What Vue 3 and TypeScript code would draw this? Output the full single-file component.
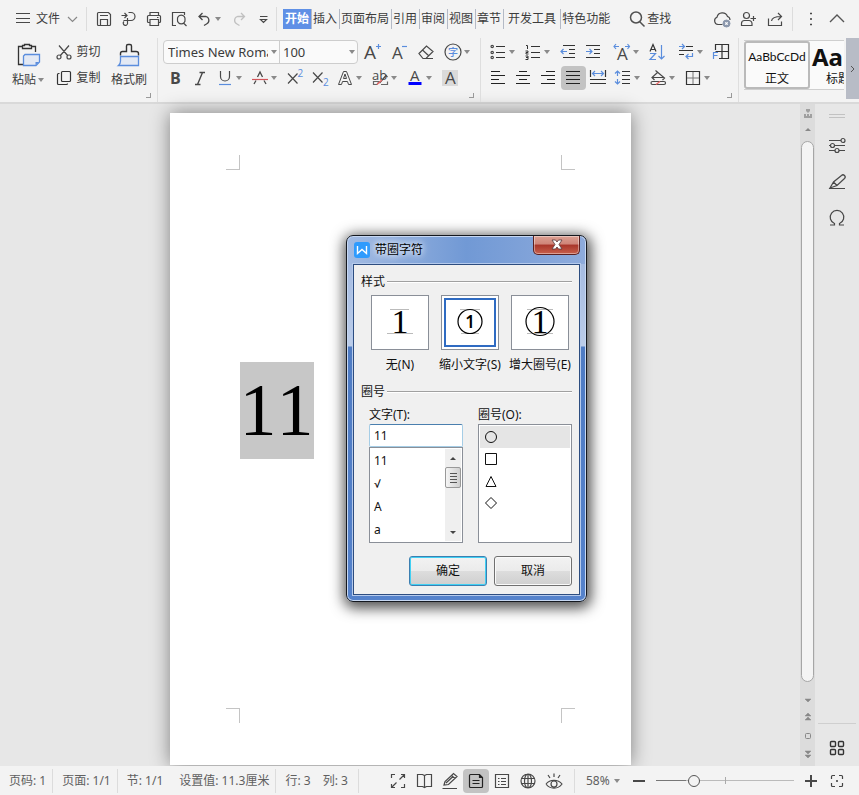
<script setup lang="ts">
import { h, ref } from 'vue'

interface Part {
  d?: string
  t?: string
  x?: number
  y?: number
  s?: number
  c?: string
  f?: string
  w?: number
  b?: number
}

const INK = '#484848'
const BLUE = '#5a8ddd'
const SANS = '"Open Sans", "Noto Sans CJK SC", sans-serif'

const p = (d: string, c = INK, f = 'none', w = 1.2): Part => ({ d, c, f, w })
const t = (text: string, x: number, y: number, s: number, c = INK, b = 400): Part => ({ t: text, x, y, s, c, b })

const icons: Record<string, Part[]> = {
  menu: [p('M3 4.500H17M3 9.500H17M3 13.500H17')],
  down: [p('M5 8L9.500 12.500L14 8', '#888')],
  up: [p('M3 13L10 6L17 13', '#555', 'none', 1.4)],
  save: [p('M4.500 3.500H14.500L16.500 5.500V15.500A1 1 0 0 1 15.500 16.500H4.500A1 1 0 0 1 3.500 15.500V4.500A1 1 0 0 1 4.500 3.500ZM6.500 16V10.500H13.500V16M6 6.500H14')],
  exportDoc: [p('M2.500 6.500H8M5.500 4L8 6.500L5.500 9M9.500 3.500H12A4 4 0 0 1 12 11.500H4.500M8.500 9V13.500A2.200 2.200 0 1 1 5 12.500')],
  print: [p('M6 6V3.500H14.500V6M6 13.500H4.500A1 1 0 0 1 3.500 12.500V7.500A1 1 0 0 1 4.500 6.500H15.500A1 1 0 0 1 16.500 7.500V12.500A1 1 0 0 1 15.500 13.500H14.500M6 10.500H14.500V16.500H6ZM13 8.500H14.500')],
  preview: [p('M7 16.500H3.500V3.500H15.500V6M14.500 14L17.500 17M8.500 10.500A3.800 3.800 0 1 0 16 10.500A3.800 3.800 0 1 0 8.500 10.500')],
  undo: [p('M8.500 4L5 7.500L8.500 11M5.500 7.500H12A4 4 0 0 1 12.500 15L10 16.500', INK, 'none', 1.3)],
  redo: [p('M12 4L15.500 7.500L12 11M15 7.500H8.500A4 4 0 0 0 8 15L10.500 16.500', '#c0c0c0', 'none', 1.3)],
  more: [p('M6 7.500H13.500M6.500 10.500L9.500 13.500L12.500 10.500Z')],
  search: [p('M3.500 8.500A5.500 5.500 0 1 0 14.500 8.500A5.500 5.500 0 1 0 3.500 8.500M13 13L17.500 17.500', '#505050', 'none', 1.5)],
  cloud: [p('M10.500 15.500H6A3.800 3.800 0 0 1 5 8.200A5.500 5.500 0 0 1 15.500 7.500A3.600 3.600 0 0 1 18 11'), p('M11 14.500A3.500 3.500 0 1 0 18 14.500A3.500 3.500 0 1 0 11 14.500', '#8b97ac', '#8b97ac', 1), p('M13.300 13.300L15.700 15.700M15.700 13.300L13.300 15.700', '#fff')],
  person: [p('M5.500 6.500A3 3 0 1 0 11.500 6.500A3 3 0 1 0 5.500 6.500M3.500 16.500V14.500A3 3 0 0 1 6.500 11.500H11A3 3 0 0 1 14 14.500V16.500ZM12.500 9.500H18M15.500 7V12')],
  share: [p('M4.500 9.500V16.500H17.500V12.500M7.500 12C8 8.500 11 7.500 17 7.500M14 4L17.500 7.500L14 11')],
  dots: [p('M9.500 4H10.500V5H9.500ZM9.500 9.500H10.500V10.500H9.500ZM9.500 15H10.500V16H9.500Z', INK, INK, 1)],
  cut: [p('M5 3.500L14 14M15 3.500L6 14M3 15A2 2 0 1 0 7 15A2 2 0 1 0 3 15M13 15A2 2 0 1 0 17 15A2 2 0 1 0 13 15')],
  copy: [p('M8.500 3.500H15.500A1 1 0 0 1 16.500 4.500V12.500A1 1 0 0 1 15.500 13.500H8.500A1 1 0 0 1 7.500 12.500V4.500A1 1 0 0 1 8.500 3.500ZM5.500 5.500H4.500A1 1 0 0 0 3.500 6.500V15.500A1 1 0 0 0 4.500 16.500H12.500A1 1 0 0 0 13.500 15.500', '#333')],
  fontUp: [t('A', 2, 17, 19), p('M14 4.500H19M16.500 2V7', BLUE)],
  fontDown: [t('A', 3, 17, 17), p('M13 4.500H18', BLUE)],
  eraser: [p('M3 11.500L10.500 4L17 9.500L10 16.500H7ZM6.500 8L13 14M9 16.500H17')],
  phonetic: [p('M2 10A8 8 0 1 0 18 10A8 8 0 1 0 2 10'), t('字', 5, 14, 10, BLUE, 500)],
  bold: [t('B', 5, 15.5, 16, INK, 700)],
  italic: [p('M9.500 4.500H15M5 16.500H10.500M12.500 4.500L7.500 16.500', INK, 'none', 1.4)],
  underline: [p('M5.500 3V8.500A4.500 4.500 0 0 0 14.500 8.500V3'), p('M4 16.500H16', BLUE)],
  strike: [p('M4 16L6 12.500M7.500 9L10 4L12.500 9M14 12.500L16 16', INK, 'none', 1.3), p('M2 11.500H18', '#d2555a')],
  sup: [p('M3 5.500L12.500 15.500M12.500 5.500L3 15.500'), t('2', 12.5, 9, 10, BLUE)],
  sub: [p('M3 4.500L12.500 14.500M12.500 4.500L3 14.500'), t('2', 13, 18, 10, BLUE)],
  outline: [p('M3.500 16.500L8.500 3.500H11.500L16.500 16.500H13.500L12.500 13.500H7.500L6.500 16.500ZM8.500 10.500H11.500L10 6Z', INK, 'none', 1)],
  highlight: [t('ab', 2, 12, 13), p('M3.500 13.500H9L7 16.500H3.500ZM11 16.500H17.500V13.500', '#666'), p('M9.500 15L16 7.500L17.500 9'), p('M7 16.500L12 12', '#e66')],
  fontColor: [t('A', 5, 13, 15), p('M3.500 15.500H16.500', '#0000ff', 'none', 3)],
  shade: [p('M2 2H18V18H2Z', '#dadada', '#dadada', 0), t('A', 5, 16, 17)],
  bullets: [p('M8 4.500H17M8 10.500H17M8 15.500H17', '#333'), p('M3 4.500A1.200 1.200 0 1 0 5.400 4.500A1.200 1.200 0 1 0 3 4.500M3 10.500A1.200 1.200 0 1 0 5.400 10.500A1.200 1.200 0 1 0 3 10.500M3 15.500A1.200 1.200 0 1 0 5.400 15.500A1.200 1.200 0 1 0 3 15.500')],
  numbers: [p('M8 4.500H17M8 10.500H17M8 15.500H17', '#333'), p('M3 3.500H4.500V7M2.500 9H5V10.500H3V12H5.500M2.500 14H5V17.500H2.500M3 15.500H5', '#333', 'none', 1)],
  outdent: [p('M5 3.500H17M11 7.500H17M11 11.500H17M5 15.500H17', '#333'), p('M3 9.500H9M5.500 7L3 9.500L5.500 12', BLUE)],
  indent: [p('M3 3.500H17M11 7.500H17M11 11.500H17M3 15.500H17', '#333'), p('M3 9.500H9M6.500 7L9 9.500L6.500 12', BLUE)],
  textScale: [t('A', 5, 18, 17), p('M2 4.500H7M4 2L2 4.500L4 7M13 4.500H17.500M15.500 2L17.500 4.500L15.500 7', BLUE)],
  sort: [p('M3 9.500L6 2.500L9 9.500M4 7.500H8', '#333'), p('M3 11.500H8.500L3 17.500H9M14.500 3V17M11.500 14L14.500 17L17.500 14', BLUE)],
  tabs: [p('M10 4.500H17M3 8.500H17M3 12.500H8', '#333'), p('M3 4.500H8M6 2L8.500 4.500L6 7M16.500 11V14.500H10M12.500 12L10 14.500L12.500 17', BLUE)],
  layout: [p('M8 16.500H17.500V2.500H4.500V8M11 3V16M4.500 9.500H17', '#333'), p('M2.500 17V10.500H7M2.500 13.500H6.500', BLUE)],
  left: [p('M3 3.500H12M3 7.500H17M3 11.500H11M3 15.500H17', '#222')],
  center: [p('M6 3.500H14M3 7.500H17M6 11.500H14M3 15.500H17', '#222')],
  right: [p('M8 3.500H17M3 7.500H17M9 11.500H17M3 15.500H17', '#222')],
  justify: [p('M3 3.500H17M3 7.500H17M3 11.500H17M3 15.500H17', '#222')],
  distribute: [p('M2.500 2V9M17.500 2V9M2 11.500H18M2 15.500H18', '#333'), p('M4.500 5.500H15.500M7 3L4.500 5.500L7 8M13 3L15.500 5.500L13 8', BLUE)],
  lineGap: [p('M9 3.500H17M9 7.500H17M9 11.500H17M9 15.500H17', '#333'), p('M4.500 3V8M2 5.500L4.500 3L7 5.500M4.500 11V16M2 13.500L4.500 16L7 13.500', BLUE)],
  bucket: [p('M7.500 2.500L16.500 10L14.500 12M9.500 4.500L4 9.500L6.500 12M4.500 9.500H16M4.500 13.500H16A1.500 1.500 0 0 1 16 16.500H4.500A1.500 1.500 0 0 1 4.500 13.500Z'), p('M8 16.500L12 13.500', '#e66')],
  border: [p('M3.500 3.500H16.500V16.500H3.500Z', '#333'), p('M10 4V16M4 10H16', '#777', 'none', 1)],
  full: [p('M3.500 7V3.500H7M13 3.500H16.500V7M3.500 13V16.500H7M13 16.500H16.500V13M11.500 8.500L16 4M8.500 11.500L4 16')],
  book: [p('M3.500 3.500H8.500L10.500 4.500L12.500 3.500H17.500V15.500H12.500L10.500 16.500L8.500 15.500H3.500ZM10.500 4.500V16')],
  pen: [p('M4 14L5 10.500L13.500 2.500L17 5.500L8.500 13.500ZM11.500 4.500L15 7.500M6 12L13 5.500M2.500 17.500H17')],
  page: [p('M4.500 3.500H13.500L16.500 6.500V15.500A1 1 0 0 1 15.500 16.500H4.500A1 1 0 0 1 3.500 15.500V4.500A1 1 0 0 1 4.500 3.500ZM6.500 9.500H13.500M6.500 12.500H13.500M13.500 4V6.500H16', '#222')],
  outlineView: [p('M3.500 3.500H16.500V16.500H3.500ZM6 7.500H7.500M9 7.500H14M6 10.500H7.500M9 10.500H14M6 13.500H7.500M9 13.500H14')],
  web: [p('M3 10A7 7 0 1 0 17 10A7 7 0 1 0 3 10M6.500 10A3.500 7 0 1 0 13.500 10A3.500 7 0 1 0 6.500 10M10 3V17M3.500 7.500H16.500M3.500 12.500H16.500')],
  eye: [p('M2 13C6 8 14 8 18 13C14 18.500 6 18.500 2 13M7 13A3 3 0 1 0 13 13A3 3 0 1 0 7 13M10 2.500V6M4 4L6 7M16 4L14 7')],
  minus: [p('M4 10H16', INK, 'none', 2)],
  plus: [p('M4 10H16M10 4V16', INK, 'none', 2)],
  focus: [p('M4.500 8V5.500A1 1 0 0 1 5.500 4.500H8M12 4.500H14.500A1 1 0 0 1 15.500 5.500V8M15.500 12V14.500A1 1 0 0 1 14.500 15.500H12M8 15.500H5.500A1 1 0 0 1 4.500 14.500V12', '#444'), p('M9.500 9.500H10.500V10.500H9.500Z', INK, INK, 1)],
  settings: [p('M2 4.500H14M2 9.500H3.500M7.500 9.500H18M2 14.500H8M12 14.500H18M14 4.500A2 2 0 1 0 18 4.500A2 2 0 1 0 14 4.500M3.500 9.500A2 2 0 1 0 7.500 9.500A2 2 0 1 0 3.500 9.500M8 14.500A2 2 0 1 0 12 14.500A2 2 0 1 0 8 14.500')],
  edit: [p('M3 16L6.500 10L14.500 3.500A1.500 1.500 0 0 1 17.500 6.500L10 13.500ZM6.500 10L10 13.500M2 16.500H18')],
  omega: [p('M3 17H7.500V15.500A6.800 6.800 0 1 1 12.500 15.500V17H17')],
  apps: [p('M4.500 3.500H7.500A1 1 0 0 1 8.500 4.500V7.500A1 1 0 0 1 7.500 8.500H4.500A1 1 0 0 1 3.500 7.500V4.500A1 1 0 0 1 4.500 3.500ZM12.500 3.500H15.500A1 1 0 0 1 16.500 4.500V7.500A1 1 0 0 1 15.500 8.500H12.500A1 1 0 0 1 11.500 7.500V4.500A1 1 0 0 1 12.500 3.500ZM4.500 11.500H7.500A1 1 0 0 1 8.500 12.500V15.500A1 1 0 0 1 7.500 16.500H4.500A1 1 0 0 1 3.500 15.500V12.500A1 1 0 0 1 4.500 11.500ZM12.500 11.500H15.500A1 1 0 0 1 16.500 12.500V15.500A1 1 0 0 1 15.500 16.500H12.500A1 1 0 0 1 11.500 15.500V12.500A1 1 0 0 1 12.500 11.500Z', '#333', 'none', 1.4)],
}

const Icon = (props: { name: string }) =>
  h(
    'svg',
    { width: 20, height: 20, viewBox: '0 0 20 20', 'aria-hidden': 'true' },
    (icons[props.name] ?? []).map((q) =>
      q.t
        ? h('text', { x: q.x, y: q.y, 'font-size': q.s, fill: q.c, 'font-weight': q.b, 'font-family': SANS }, q.t)
        : h('path', { d: q.d, stroke: q.c, fill: q.f, 'stroke-width': q.w }),
    ),
  )
Icon.props = ['name']

interface Tool {
  icon: string
  label: string
  caret?: boolean
  active?: boolean
}
const tool = (icon: string, label: string, caret = false, active = false): Tool => ({ icon, label, caret, active })

const quickTools = [tool('save', '保存'), tool('exportDoc', '输出'), tool('print', '打印'), tool('preview', '打印预览'), tool('undo', '撤销', true), tool('redo', '恢复'), tool('more', '更多')]
const tabs = ['开始', '插入', '页面布局', '引用', '审阅', '视图', '章节', '开发工具', '特色功能']
const activeTab = ref('开始')
const accountTools = [tool('cloud', '云同步'), tool('person', '协作'), tool('share', '分享')]
const sizeTools = [tool('fontUp', '增大字号'), tool('fontDown', '减小字号'), tool('eraser', '清除格式'), tool('phonetic', '拼音指南', true)]
const fontTools = [tool('bold', '加粗'), tool('italic', '倾斜'), tool('underline', '下划线', true), tool('strike', '删除线', true), tool('sup', '上标'), tool('sub', '下标'), tool('outline', '文字效果', true), tool('highlight', '突出显示', true), tool('fontColor', '字体颜色', true), tool('shade', '字符底纹')]
const listTools = [
  [tool('bullets', '项目符号', true), tool('numbers', '编号', true), tool('outdent', '减少缩进'), tool('indent', '增加缩进')],
  [tool('textScale', '中文版式', true), tool('sort', '排序')],
  [tool('tabs', '制表位', true), tool('layout', '框架')],
]
const alignTools = [tool('left', '左对齐'), tool('center', '居中'), tool('right', '右对齐'), tool('justify', '两端对齐', false, true), tool('distribute', '分散对齐'), tool('lineGap', '行距', true), tool('bucket', '底纹', true), tool('border', '边框', true)]
const viewTools = [tool('full', '全屏'), tool('book', '阅读版式'), tool('pen', '写作模式'), tool('page', '页面视图', false, true), tool('outlineView', '大纲'), tool('web', 'Web 版式'), tool('eye', '护眼模式')]
const sideTools = [tool('settings', '设置'), tool('edit', '样式'), tool('omega', '符号')]

const fontName = ref('Times New Roman')
const fontSize = ref('100')
const zoom = ref(25)
const dialogOpen = ref(true)
const styleOptions = ['无(N)', '缩小文字(S)', '增大圈号(E)']
const style = ref('缩小文字(S)')
const circledText = ref('11')
const characters = ['11', '√', 'A', 'a']
const shapes = [
  { name: '圆形', d: 'M1.500 7a5.500 5.500 0 1 0 11 0a5.500 5.500 0 1 0 -11 0' },
  { name: '方形', d: 'M1.500 1.500H12.500V12.500H1.500Z' },
  { name: '三角形', d: 'M7 2.500L12 12.500H2Z' },
  { name: '菱形', d: 'M7 1.500L12.500 7L7 12.500L1.500 7Z' },
]
const shape = ref('圆形')
</script>

<template>
  <div class="app">
    <header class="ribbon">
      <div class="topbar">
        <button class="file"><Icon name="menu" /><span>文件</span><Icon name="down" /></button>
        <i class="rule"></i>
        <div class="quick">
          <button v-for="q in quickTools" :key="q.icon" class="tool" :class="{ wide: q.caret }" :aria-label="q.label">
            <Icon :name="q.icon" /><i v-if="q.caret" class="caret"></i>
          </button>
        </div>
        <i class="rule"></i>
        <nav class="tabs">
          <button v-for="name in tabs" :key="name" class="tab" :class="{ on: name === activeTab, roomy: name === '开发工具' }" @click="activeTab = name">{{ name }}</button>
        </nav>
        <button class="search"><Icon name="search" /><span>查找</span></button>
        <div class="account">
          <button v-for="q in accountTools" :key="q.icon" class="cell" :aria-label="q.label"><Icon :name="q.icon" /></button>
          <i class="rule"></i>
          <button class="cell" aria-label="更多选项"><Icon name="dots" /></button>
          <button class="cell" aria-label="收起功能区"><Icon name="up" /></button>
        </div>
      </div>

      <div class="groups">
        <section class="group clipboard">
          <button class="big">
            <svg width="26" height="26" viewBox="0 0 26 26">
              <path d="M7 4.500H3.500V22.500H8M17 4.500H20.500V10M7.500 6.500V3.500H9.500V2.500H14.500V3.500H16.500V6.500Z" fill="none" stroke="#333" stroke-width="1.300" />
              <path d="M10 12.500H24.500V20L21 23.500H8.500V14Z" fill="#e3e9f4" stroke="#5a8ddd" stroke-width="1.300" />
              <path d="M20.500 23V20H24Z" fill="#5a8ddd" />
            </svg>
            <span>粘贴<i class="caret"></i></span>
          </button>
          <div class="stack">
            <button class="line"><Icon name="cut" />剪切</button>
            <button class="line"><Icon name="copy" />复制</button>
          </div>
          <button class="big">
            <svg width="26" height="26" viewBox="0 0 26 26">
              <path d="M4.500 13.500V11.500Q4.500 9.500 6.500 9.500H10.500V4Q10.500 2.500 12 2.500H14Q15.500 2.500 15.500 4V9.500H20Q22.500 9.500 22.500 11.500V13.500" fill="none" stroke="#333" stroke-width="1.400" />
              <path d="M4.500 14.500H22.500V23.500H2.500Q4.500 22 4.500 19Z" fill="#e3e9f4" stroke="#5a8ddd" stroke-width="1.300" />
            </svg>
            <span>格式刷</span>
          </button>
          <i class="launcher"></i>
        </section>

        <section class="group font">
          <div class="toolrow spaced">
            <div class="combo">
              <input v-model="fontName" class="name" aria-label="字体" />
              <button aria-label="选择字体"><i class="caret"></i></button>
              <input v-model="fontSize" class="size" aria-label="字号" />
              <button aria-label="选择字号"><i class="caret"></i></button>
            </div>
            <button v-for="q in sizeTools" :key="q.icon" class="tool" :class="{ wide: q.caret }" :aria-label="q.label">
              <Icon :name="q.icon" /><i v-if="q.caret" class="caret"></i>
            </button>
          </div>
          <div class="toolrow">
            <button v-for="q in fontTools" :key="q.icon" class="tool" :class="{ wide: q.caret }" :aria-label="q.label">
              <Icon :name="q.icon" /><i v-if="q.caret" class="caret"></i>
            </button>
          </div>
          <i class="launcher"></i>
        </section>

        <section class="group para">
          <div class="toolrow sets">
            <div v-for="(set, n) in listTools" :key="n" class="toolrow">
              <button v-for="q in set" :key="q.icon" class="tool" :class="{ wide: q.caret }" :aria-label="q.label">
                <Icon :name="q.icon" /><i v-if="q.caret" class="caret"></i>
              </button>
            </div>
          </div>
          <div class="toolrow">
            <button v-for="q in alignTools" :key="q.icon" class="tool" :class="{ wide: q.caret, active: q.active }" :aria-label="q.label">
              <Icon :name="q.icon" /><i v-if="q.caret" class="caret"></i>
            </button>
          </div>
          <i class="launcher"></i>
        </section>

        <section class="gallery">
          <button class="sample chosen"><b class="body-face">AaBbCcDd</b><span>正文</span></button>
          <button class="sample"><b class="head-face">AaBb</b><span>标题 1</span></button>
        </section>
        <button class="scroll-groups" aria-label="更多样式">
          <svg width="6" height="8" viewBox="0 0 6 8"><path d="M1 1L4 4L1 7" fill="none" stroke="#555" /></svg>
        </button>
      </div>
    </header>

    <main class="work">
      <div class="canvas">
        <article class="paper">
          <div class="marks"><i class="mark tl"></i><i class="mark tr"></i></div>
          <p class="text"><span>11</span></p>
          <div class="marks"><i class="mark bl"></i><i class="mark br"></i></div>
        </article>
      </div>

      <div class="vscroll">
        <svg width="12" height="10" viewBox="0 0 12 10"><path d="M4 0H8V2L6 4L4 2ZM2 5H4V7H5V5H7V7H8V5H10V9H2Z" fill="#a0a0a0" /></svg>
        <svg width="12" height="18" viewBox="0 0 12 18"><path d="M3 12L6 9L9 12Z" fill="#888" /></svg>
        <div class="thumb"></div>
        <svg width="12" height="84" viewBox="0 0 12 84">
          <path d="M3 17H9L6 20ZM3 34L6 31L9 34ZM3 38L6 35L9 38ZM3 69H9L6 72ZM3 73H9L6 76Z" fill="#888" stroke="#888" stroke-width=".5" />
          <rect x="3.500" y="51.500" width="5" height="5" rx="1" fill="none" stroke="#888" />
        </svg>
      </div>

      <aside class="side">
        <i class="grip"></i>
        <button v-for="q in sideTools" :key="q.icon" :aria-label="q.label"><Icon :name="q.icon" /></button>
        <button class="apps" aria-label="应用"><Icon name="apps" /></button>
      </aside>
    </main>

    <footer class="status">
      <span class="stat">页码: 1</span><i class="rule"></i>
      <span class="stat">页面: 1/1</span><i class="rule"></i>
      <span class="stat">节: 1/1</span>
      <span class="stat">设置值: 11.3厘米</span><i class="rule"></i>
      <span class="stat">行: 3</span>
      <span class="stat last">列: 3</span><i class="rule"></i>
      <div class="views">
        <button v-for="q in viewTools" :key="q.icon" class="cell" :class="{ active: q.active }" :aria-label="q.label"><Icon :name="q.icon" /></button>
      </div>
      <i class="rule"></i>
      <button class="percent">58%<i class="caret"></i></button>
      <button class="cell" aria-label="缩小"><Icon name="minus" /></button>
      <input v-model="zoom" class="zoom" type="range" min="0" max="100" aria-label="显示比例" />
      <button class="cell" aria-label="放大"><Icon name="plus" /></button>
      <button class="cell" aria-label="适合窗口"><Icon name="focus" /></button>
    </footer>

    <form v-if="dialogOpen" class="dialog" role="dialog" aria-labelledby="dialog-title" @submit.prevent="dialogOpen = false">
      <div class="titlebar">
        <svg width="16" height="16" viewBox="0 0 16 16">
          <rect width="16" height="16" rx="3" fill="#2f9bfd" />
          <path d="M3.500 4V11.500L8 7.500L12.500 11.500V4" fill="none" stroke="#fff" stroke-width="1.400" />
        </svg>
        <h1 id="dialog-title">带圈字符</h1>
        <button type="button" class="close" aria-label="关闭" @click="dialogOpen = false">
          <svg width="14" height="12" viewBox="0 0 14 12">
            <path d="M2 1H5.500L7 3L8.500 1H12L9 5.500L12 10H8.500L7 8L5.500 10H2L5 5.500Z" fill="#fff" stroke="#55383c" stroke-width=".8" />
          </svg>
        </button>
      </div>
      <div class="panel">
        <h2><span>样式</span></h2>
        <div class="options">
          <label v-for="(name, n) in styleOptions" :key="name" class="option" :class="{ picked: name === style }">
            <input v-model="style" type="radio" name="style" :value="name" />
            <span class="tile">
              <svg width="52" height="49" viewBox="0 0 52 49">
                <path :d="n === 0 ? 'M16 11.500H35M13 35.500H39' : n === 1 ? 'M16 11.500H36M17 35.500H35' : 'M13 11.500H39M13 35.500H39'" stroke="#bbb" />
                <circle v-if="n > 0" cx="26" cy="23.500" :r="n === 1 ? 12 : 14" fill="none" stroke="#000" stroke-width="1.200" />
                <text x="26" :y="n === 1 ? 30 : 35" text-anchor="middle" :class="n === 1 ? 'digit-small' : 'digit-large'">1</text>
              </svg>
            </span>
            <span>{{ name }}</span>
          </label>
        </div>
        <h2><span>圈号</span></h2>
        <div class="pickers">
          <div class="picker">
            <label for="circled">文字(T):</label>
            <input id="circled" v-model="circledText" class="entry" />
            <div class="list split">
              <ul role="listbox" aria-label="文字">
                <li v-for="c in characters" :key="c" role="option" @click="circledText = c">{{ c }}</li>
              </ul>
              <div class="bar">
                <svg width="16" height="18" viewBox="0 0 16 18"><path d="M5 11L8 8L11 11Z" fill="#444" /></svg>
                <i class="knob"></i>
                <svg width="16" height="18" viewBox="0 0 16 18"><path d="M5 8L8 11L11 8Z" fill="#444" /></svg>
              </div>
            </div>
          </div>
          <div class="picker">
            <label id="shape-label">圈号(O):</label>
            <ul class="list shapes" role="listbox" aria-labelledby="shape-label">
              <li v-for="s in shapes" :key="s.name" role="option" :aria-label="s.name" :class="{ sel: s.name === shape }" @click="shape = s.name">
                <svg width="14" height="14" viewBox="0 0 14 14"><path :d="s.d" fill="none" stroke="#111" /></svg>
              </li>
            </ul>
          </div>
        </div>
        <div class="actions">
          <button type="submit" class="push primary">确定</button>
          <button type="button" class="push" @click="dialogOpen = false">取消</button>
        </div>
      </div>
    </form>
  </div>
</template>

<style>
body {
  margin: 0;
}
</style>

<style scoped>
.app {
  position: relative;
  display: flex;
  flex-direction: column;
  height: 100vh;
  overflow: hidden;
  background: #e7e7e7;
  color: #3c3c3c;
  font: 12px/16px "Noto Sans", Roboto, "Noto Sans CJK SC", sans-serif;
}
*,
*::before,
*::after {
  box-sizing: border-box;
}
button,
input {
  margin: 0;
  padding: 0;
  border: 0;
  background: none;
  color: inherit;
  font: inherit;
}
svg {
  display: block;
  flex: none;
  overflow: visible;
}
.caret {
  display: inline-block;
  flex: none;
  border: 3px solid transparent;
  border-top: 4px solid #8a8a8a;
  border-bottom: 0;
}
.rule {
  flex: none;
  width: 1px;
  height: 24px;
  background: #dcdcdc;
}

/* ribbon */
.ribbon {
  flex: none;
  background: #f3f3f3;
  border-bottom: 2px solid #d9d9d9;
}
.topbar {
  display: flex;
  align-items: center;
  height: 38px;
  padding: 0 9px 0 13px;
}
.file {
  display: flex;
  align-items: center;
  gap: 3px;
  width: 73px;
}
.quick {
  display: flex;
  padding-left: 5px;
  width: 189px;
}
.tool {
  display: flex;
  align-items: center;
  flex: none;
  width: 25px;
  height: 24px;
  padding-left: 2px;
  border-radius: 4px;
}
.tool.wide {
  width: 35px;
}
.tool .caret {
  margin-left: 1px;
}
.tool.active {
  background: #c3c3c3;
}
.tabs {
  display: flex;
  padding-left: 6px;
}
.tab {
  flex: none;
  height: 20px;
  padding: 0 2px;
  border-right: 1px solid #b4bac6;
  white-space: nowrap;
}
.tab + .tab {
  padding: 0 2px 0 1px;
}
.tab + .tab.roomy {
  padding: 0 4px;
}
.tab.on {
  background: #5f90e6;
  color: #fff;
  font-weight: 700;
}
.tab:last-child {
  border-right: 0;
}
.search {
  display: flex;
  align-items: center;
  margin-left: 15px;
}
.account {
  display: flex;
  align-items: center;
  margin-left: auto;
}
.account .rule {
  margin: 0 5px;
}
.cell {
  display: flex;
  align-items: center;
  justify-content: center;
  flex: none;
  width: 26px;
  height: 24px;
  border-radius: 4px;
}
.groups {
  display: flex;
  height: 64px;
}
.group {
  position: relative;
  flex: none;
  padding-top: 2px;
  border-right: 1px solid #dedede;
}
.clipboard {
  display: flex;
  justify-content: space-between;
  padding-right: 10px;
  padding-left: 12px;
  width: 158px;
}
.big {
  display: flex;
  flex-direction: column;
  align-items: center;
  gap: 4px;
  height: 52px;
  padding-top: 2px;
}
.big span {
  display: flex;
  align-items: center;
  gap: 2px;
  white-space: nowrap;
}
.stack {
  display: flex;
  flex-direction: column;
  gap: 2px;
}
.line {
  display: flex;
  align-items: center;
  gap: 2px;
  height: 24px;
}
.launcher {
  position: absolute;
  right: 6px;
  bottom: 4px;
  width: 5px;
  height: 5px;
  border: solid #999;
  border-width: 0 1px 1px 0;
}
.font {
  padding-right: 4px;
  padding-left: 5px;
}
.para {
  padding-right: 4px;
  padding-left: 5px;
}
.toolrow {
  display: flex;
  height: 26px;
}
.spaced {
  gap: 2px;
}
.sets {
  gap: 4px;
}
.combo {
  display: flex;
  width: 195px;
  height: 24px;
  border: 1px solid #cdcdcd;
  border-radius: 4px;
  background: #fafafa;
  font-size: 13px;
}
.combo input {
  min-width: 0;
  padding-left: 4px;
}
.combo .name {
  width: 104px;
}
.combo .size {
  flex: 1;
  padding-left: 3px;
  border-left: 1px solid #cdcdcd;
}
.combo button {
  display: flex;
  align-items: center;
  justify-content: center;
  width: 11px;
}
.gallery {
  display: flex;
  flex: 1;
  min-width: 0;
  height: 50px;
  margin: 2px 2px 0 5px;
  overflow: hidden;
  border: solid #cfcfcf;
  border-width: 1px 0;
  background: #fafafa;
  color: #111;
}
.sample {
  display: flex;
  flex-direction: column;
  align-items: center;
  justify-content: flex-end;
  flex: none;
  width: 66px;
  height: 48px;
  border: 2px solid transparent;
  border-radius: 3px;
  white-space: nowrap;
}
.sample.chosen {
  border-color: #bababa;
}
.sample b {
  display: flex;
  align-items: center;
  height: 28px;
  font-weight: 400;
}
.sample .body-face {
  font: 12px/28px Lato, sans-serif;
}
.sample .head-face {
  font: 700 24px/28px "Noto Sans", sans-serif;
}
.scroll-groups {
  display: flex;
  align-items: center;
  justify-content: center;
  width: 13px;
  height: 61px;
  background: #b8bcc6;
}

/* document */
.work {
  display: flex;
  flex: 1;
  min-height: 0;
}
.canvas {
  flex: 1;
  display: flex;
  justify-content: center;
  min-width: 0;
  padding: 9px 0 1px;
}
.paper {
  display: flex;
  flex-direction: column;
  width: 461px;
  padding: 42px 56px;
  background: #fff;
  box-shadow: 0 0 18px rgba(0, 0, 0, 0.45);
}
.marks {
  display: flex;
  justify-content: space-between;
}
.mark {
  width: 14px;
  height: 15px;
  border: 0 solid #c4c4c4;
}
.tl {
  border-width: 0 1px 1px 0;
}
.tr {
  border-width: 0 0 1px 1px;
}
.bl {
  border-width: 1px 1px 0 0;
}
.br {
  border-width: 1px 0 0 1px;
}
.text {
  flex: 1;
  margin: 0;
  padding: 192px 14px 0;
  color: #000;
  font: 74px/97px "Liberation Serif", serif;
  font-kerning: none;
}
.text span {
  display: inline-block;
  background: #c7c7c7;
}
.vscroll {
  display: flex;
  flex-direction: column;
  align-items: center;
  width: 15px;
  padding-top: 5px;
  background: #dcdcdc;
}
.thumb {
  flex: 1;
  width: 13px;
  margin-top: 4px;
  border: 1px solid #a6a6a6;
  border-radius: 7px;
  background: #f4f4f4;
}
.side {
  display: flex;
  flex-direction: column;
  align-items: center;
  gap: 16px;
  width: 44px;
  padding: 10px 3px 8px;
}
.grip {
  width: 16px;
  height: 4px;
  margin-bottom: 2px;
  border: solid #c2c2c2;
  border-width: 1px 0;
}
.apps {
  display: flex;
  justify-content: center;
  width: 100%;
  margin-top: auto;
  padding-top: 14px;
  border-top: 1px solid #cfcfcf;
}

/* status bar */
.status {
  display: flex;
  align-items: center;
  flex: none;
  height: 29px;
  padding-right: 9px;
  background: #f3f3f3;
  color: #606060;
  white-space: nowrap;
}
.stat {
  padding: 0 6px 0 9px;
}
.stat + .stat {
  padding-left: 10px;
}
.stat + .stat.last {
  padding: 0 10px 0 6px;
}
.views {
  display: flex;
  margin: 0 7px 0 auto;
}
.cell.active {
  background: #c3c3c3;
}
.percent {
  display: flex;
  align-items: center;
  gap: 4px;
  width: 51px;
  padding-left: 11px;
}
.zoom {
  width: 138px;
  height: 20px;
  margin: 0 4px;
  appearance: none;
  background:
    linear-gradient(#777, #777) 0 50% / 30px 1px no-repeat,
    linear-gradient(#aaa, #aaa) 50% 50% / 1px 7px no-repeat,
    linear-gradient(#bbb, #bbb) 0 50% / 100% 1px no-repeat;
}
.zoom::-webkit-slider-thumb {
  appearance: none;
  width: 12px;
  height: 12px;
  border: 1px solid #555;
  border-radius: 50%;
  background: #f3f3f3;
}

/* dialog */
.dialog {
  position: absolute;
  top: 235px;
  left: 346px;
  width: 241px;
  padding: 0 6px 6px;
  border: 1px solid #14181f;
  border-radius: 7px;
  background: linear-gradient(90deg, #a3bbe2, #7199d5 50%, #8eabdc) 0 0 / 100% 28px no-repeat, linear-gradient(#9db5df, #bccde9 110px, #4f7cc4 111px, #5582cb);
  box-shadow: inset 0 0 0 1px #c7d8f2, 1px 3px 14px 3px rgba(0, 0, 0, 0.7);
  color: #111;
}
.titlebar {
  display: flex;
  align-items: center;
  gap: 5px;
  height: 28px;
  padding-left: 1px;
}
.titlebar h1 {
  flex: 1;
  margin: 0;
  color: #000;
  font: inherit;
  text-shadow: 0 0 6px #fff, 0 0 10px #fff;
}
.close {
  display: flex;
  align-items: center;
  justify-content: center;
  align-self: flex-start;
  width: 47px;
  height: 19px;
  border: 1px solid #5c2020;
  border-top: 0;
  border-radius: 0 0 5px 5px;
  background: linear-gradient(#dca093, #cf8478 45%, #a8352a 50%, #c8604c);
  box-shadow: inset 0 0 0 1px rgba(255, 255, 255, 0.4);
}
.panel {
  display: flex;
  flex-direction: column;
  padding: 9px 7px 8px 6px;
  border: 1px solid #2d4d80;
  background: #f0f0f0;
  box-shadow: 0 0 0 1px #b5caec;
}
.panel h2 {
  display: flex;
  align-items: center;
  gap: 2px;
  margin: 0;
  padding-left: 1px;
  font: inherit;
}
.panel h2::after {
  content: "";
  flex: 1;
  height: 2px;
  border-top: 1px solid #a0a0a0;
  background: #fff;
}
.options {
  display: grid;
  grid-template-columns: repeat(3, 70px);
  padding: 5px 0 11px 5px;
}
.option {
  display: flex;
  flex-direction: column;
  align-items: center;
  gap: 7px;
  white-space: nowrap;
}
.option input {
  position: absolute;
  opacity: 0;
}
.tile {
  display: flex;
  align-items: center;
  justify-content: center;
  width: 58px;
  height: 55px;
  border: 1px solid #8a8f98;
  background: #fff;
}
.picked .tile {
  box-shadow: inset 0 0 0 2px #fff, inset 0 0 0 4px #2f6bc2;
}
.digit-small {
  font: 600 17px "Noto Sans", sans-serif;
}
.digit-large {
  font: 34px "Liberation Serif", serif;
}
.pickers {
  display: grid;
  grid-template-columns: 94px 94px;
  gap: 15px;
  padding: 7px 0 13px 9px;
}
.picker {
  display: flex;
  flex-direction: column;
}
.picker label {
  height: 17px;
}
.entry {
  height: 23px;
  padding-left: 4px;
  border: 1px solid #a5cde6;
  border-top-color: #4a7fae;
  border-radius: 2px;
  background: #fff;
}
.list {
  flex: 1;
  margin: 0;
  padding: 1px;
  border: 1px solid #8a8f98;
  background: #fff;
  list-style: none;
}
.split {
  display: flex;
  height: 96px;
  overflow: hidden;
}
.split ul {
  flex: 1;
  margin: 0;
  padding: 0 0 0 3px;
  list-style: none;
}
.split li {
  height: 23px;
  line-height: 24px;
}
.bar {
  display: flex;
  flex-direction: column;
  background: #efefef;
}
.bar svg:last-child {
  margin-top: auto;
}
.knob {
  height: 21px;
  border: 1px solid #999;
  border-radius: 2px;
  background:
    repeating-linear-gradient(#555 0 1px, transparent 1px 3px) 50% 50% / 7px 10px no-repeat,
    linear-gradient(90deg, #f5f5f5, #cfcfcf);
}
.shapes li {
  display: flex;
  align-items: center;
  height: 22px;
  padding-left: 4px;
}
.shapes .sel {
  background: #e5e5e5;
}
.actions {
  display: flex;
  justify-content: flex-end;
  gap: 7px;
}
.push {
  width: 78px;
  height: 30px;
  border: 1px solid #707070;
  border-radius: 3px;
  background: linear-gradient(#f2f2f2, #ebebeb 49%, #dddddd 50%, #cfcfcf);
  box-shadow: inset 0 0 0 1px #fafafa;
}
.primary {
  border-color: #3c7fb1;
  box-shadow: inset 0 0 0 1px #41d0f3;
}
</style>
